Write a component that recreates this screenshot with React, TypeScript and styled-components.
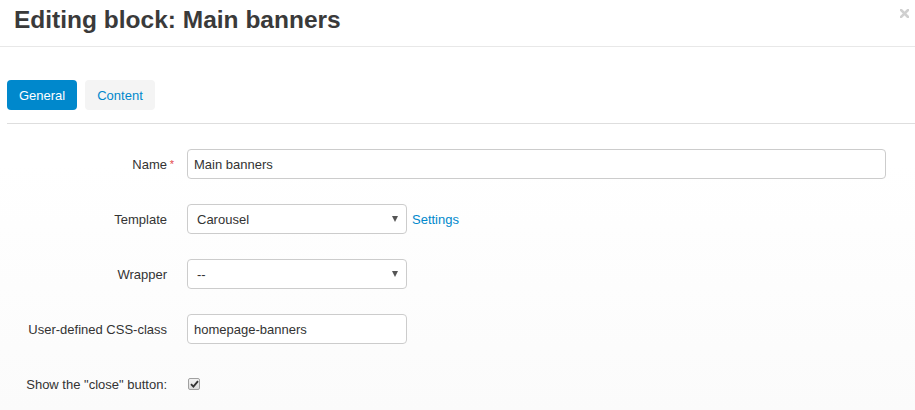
import React from 'react';
import styled, { createGlobalStyle } from 'styled-components';

const GlobalStyle = createGlobalStyle`
  html, body {
    margin: 0;
    padding: 0;
  }
  body {
    font-family: "Liberation Sans", Arial, sans-serif;
    font-size: 13px;
    color: #333;
    background: linear-gradient(to bottom, #ffffff 0%, #ffffff 40%, #fbfbfb 100%);
    min-height: 410px;
  }
`;

const Modal = styled.div`
  position: relative;
  width: 915px;
  height: 410px;
  overflow: hidden;
`;

const Header = styled.div`
  padding: 6px 14px 12px;
  border-bottom: 1px solid #e8e8e8;
  background: #fff;
`;

const Title = styled.h3`
  margin: 0;
  font-size: 24.5px;
  line-height: 28px;
  font-weight: bold;
  color: #3a3a3a;
`;

const Close = styled.button`
  position: absolute;
  top: 6px;
  right: 6px;
  border: 0;
  padding: 0;
  background: none;
  width: 10px;
  height: 10px;
  cursor: pointer;
`;

const Tabs = styled.div`
  display: flex;
  gap: 8px;
  margin: 33px 0 0 7px;
  padding-bottom: 13px;
  border-bottom: 1px solid #dedede;
`;

const Tab = styled.button<{ $active?: boolean }>`
  width: 70px;
  height: 30px;
  border: 0;
  border-radius: 4px;
  font-family: inherit;
  font-size: 13px;
  cursor: pointer;
  color: ${(p) => (p.$active ? '#fff' : '#0088cc')};
  background: ${(p) => (p.$active ? '#0088cc' : '#f4f4f4')};
`;

const Form = styled.div`
  display: grid;
  grid-template-columns: 160px 1fr;
  column-gap: 20px;
  row-gap: 25px;
  padding: 25px 29px 0 7px;
`;

const Label = styled.label`
  position: relative;
  display: flex;
  align-items: center;
  justify-content: flex-end;
  height: 30px;
  color: #333;
  white-space: nowrap;
`;

const Required = styled.span`
  position: absolute;
  right: -7px;
  top: 9px;
  color: #e34a4a;
  font-size: 11px;
`;

const Field = styled.div`
  display: flex;
  align-items: center;
  gap: 5px;
  height: 30px;
`;

const Input = styled.input<{ $wide?: boolean }>`
  box-sizing: border-box;
  width: ${(p) => (p.$wide ? '100%' : '220px')};
  height: 30px;
  padding: 0 6px;
  border: 1px solid #cccccc;
  border-radius: 4px;
  background: #fff;
  font-family: inherit;
  font-size: 13px;
  color: #333;
  outline: none;
`;

const SelectWrap = styled.div`
  position: relative;
  width: 220px;
  height: 30px;
`;

const Select = styled.select`
  box-sizing: border-box;
  width: 100%;
  height: 30px;
  padding: 0 20px 0 9px;
  border: 1px solid #cccccc;
  border-radius: 4px;
  background: #fff;
  font-family: inherit;
  font-size: 13px;
  color: #333;
  appearance: none;
  outline: none;
`;

const Caret = styled.span`
  position: absolute;
  right: 9px;
  top: 12px;
  width: 0;
  height: 0;
  border-left: 3.5px solid transparent;
  border-right: 3.5px solid transparent;
  border-top: 6px solid #555;
  pointer-events: none;
`;

const Link = styled.a`
  color: #0088cc;
  text-decoration: none;
  font-size: 13px;
`;

const Check = styled.span`
  box-sizing: border-box;
  display: inline-flex;
  align-items: center;
  justify-content: center;
  width: 12px;
  height: 12px;
  margin-left: 1px;
  border: 1px solid #a0a0a0;
  border-radius: 2px;
  background: linear-gradient(#f2f2f2, #dcdcdc);
`;

export default function App() {
  return (
    <Modal>
      <GlobalStyle />
      <Header>
        <Title>Editing block: Main banners</Title>
      </Header>
      <Close aria-label="close">
        <svg width="9" height="9" viewBox="0 0 9 9">
          <path d="M1 1L8 8M8 1L1 8" stroke="#d0d0d0" strokeWidth="2.6" strokeLinecap="square" />
        </svg>
      </Close>

      <Tabs>
        <Tab $active>General</Tab>
        <Tab>Content</Tab>
      </Tabs>

      <Form>
        <Label>
          Name<Required>*</Required>
        </Label>
        <Field>
          <Input $wide defaultValue="Main banners" />
        </Field>

        <Label>Template</Label>
        <Field>
          <SelectWrap>
            <Select defaultValue="carousel">
              <option value="carousel">Carousel</option>
            </Select>
            <Caret />
          </SelectWrap>
          <Link href="#">Settings</Link>
        </Field>

        <Label>Wrapper</Label>
        <Field>
          <SelectWrap>
            <Select defaultValue="none">
              <option value="none">--</option>
            </Select>
            <Caret />
          </SelectWrap>
        </Field>

        <Label>User-defined CSS-class</Label>
        <Field>
          <Input defaultValue="homepage-banners" />
        </Field>

        <Label>Show the "close" button:</Label>
        <Field>
          <Check>
            <svg width="9" height="8" viewBox="0 0 9 8">
              <path d="M1 4.2L3.4 6.6L8 1.2" fill="none" stroke="#333" strokeWidth="1.9" />
            </svg>
          </Check>
        </Field>
      </Form>
    </Modal>
  );
}
